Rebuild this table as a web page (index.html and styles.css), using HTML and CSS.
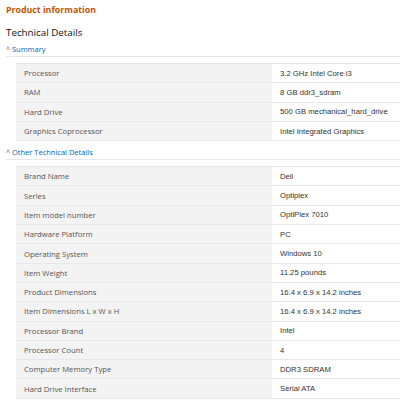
FILE: index.html
```
<!DOCTYPE html>
<html>
<head>
<meta charset="utf-8">
<link rel="stylesheet" href="styles.css">
</head>
<body>
<div class="page">
  <h2 class="title">Product information</h2>
  <h3 class="subtitle">Technical Details</h3>
  <div class="section">
    <div class="toggle"><span class="caret">^</span> <span class="link">Summary</span></div>
    <table class="specs">
      <tr><th>Processor</th><td>3.2 GHz Intel Core i3</td></tr>
      <tr><th>RAM</th><td>8 GB ddr3_sdram</td></tr>
      <tr><th>Hard Drive</th><td>500 GB mechanical_hard_drive</td></tr>
      <tr><th>Graphics Coprocessor</th><td>Intel Integrated Graphics</td></tr>
    </table>
  </div>
  <div class="section">
    <div class="toggle"><span class="caret">^</span> <span class="link">Other Technical Details</span></div>
    <table class="specs">
      <tr><th>Brand Name</th><td>Dell</td></tr>
      <tr><th>Series</th><td>Optiplex</td></tr>
      <tr><th>Item model number</th><td>OptiPlex 7010</td></tr>
      <tr><th>Hardware Platform</th><td>PC</td></tr>
      <tr><th>Operating System</th><td>Windows 10</td></tr>
      <tr><th>Item Weight</th><td>11.25 pounds</td></tr>
      <tr><th>Product Dimensions</th><td>16.4 x 6.9 x 14.2 inches</td></tr>
      <tr><th>Item Dimensions L x W x H</th><td>16.4 x 6.9 x 14.2 inches</td></tr>
      <tr><th>Processor Brand</th><td>Intel</td></tr>
      <tr><th>Processor Count</th><td>4</td></tr>
      <tr><th>Computer Memory Type</th><td>DDR3 SDRAM</td></tr>
      <tr><th>Hard Drive Interface</th><td>Serial ATA</td></tr>
    </table>
  </div>
</div>
</body>
</html>
```
FILE: styles.css
```
html, body {
  margin: 0;
  padding: 0;
  background: #fff;
}
.page {
  padding: 3px 0 0 6px;
  font-family: "Open Sans", "Noto Sans", sans-serif;
  color: #0f1111;
}
.title {
  margin: 0;
  font-size: 8.8px;
  line-height: 14px;
  font-weight: 700;
  color: #c45500;
}
.subtitle {
  margin: 8px 0 0 0;
  font-size: 9.8px;
  line-height: 15px;
  font-weight: 400;
  color: #0f1111;
}
.section {
  margin-top: 4px;
}
.toggle {
  font-size: 7.5px;
  line-height: 11px;
  border-bottom: 1px solid #e7e7e7;
  padding-bottom: 1px;
  margin-top: 3px;
}
.caret {
  color: #555;
  font-size: 7px;
}
.link {
  color: #0066c0;
}
.specs {
  border-collapse: collapse;
  margin: 6px 0 6px 10px;
  width: calc(100% - 10px + 2px);
}
.specs th, .specs td {
  border-top: 1px solid #e7e7e7;
  border-bottom: 1px solid #e7e7e7;
  height: 18.3px;
  padding: 0 0 0 8px;
  font-size: 7.7px;
  font-weight: 400;
  text-align: left;
  vertical-align: middle;
}
.specs th {
  background: #f3f3f3;
  color: #555;
  width: 248px;
  font-family: "Open Sans", "Noto Sans", sans-serif;
}
.specs td {
  background: #fff;
  color: #333;
  font-family: "Liberation Sans", Arial, sans-serif;
}
```
